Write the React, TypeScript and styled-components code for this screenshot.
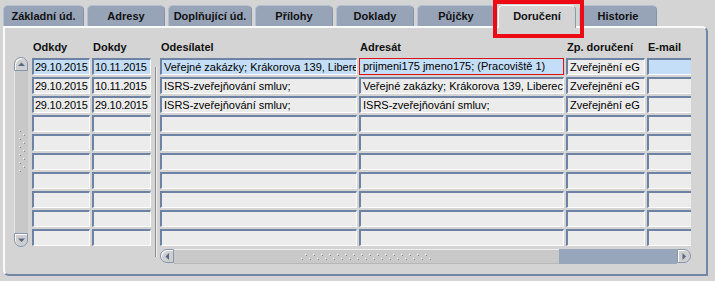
import React from "react";
import styled, { createGlobalStyle } from "styled-components";

const Global = createGlobalStyle`
  html, body { margin: 0; padding: 0; background: #d4d4d4; }
  * { box-sizing: border-box; }
`;

const Screen = styled.div`
  position: relative;
  width: 715px;
  height: 281px;
  background: #d4d4d4;
  font-family: "Liberation Sans", Arial, sans-serif;
  font-size: 11px;
  color: #000;
  overflow: hidden;
`;

const TabBar = styled.div`
  display: flex;
  gap: 3px;
  padding: 5px 0 0 3px;
  height: 27px;
  position: relative;
  z-index: 2;
`;

const Tab = styled.div<{ $w: number; $active?: boolean }>`
  width: ${(p) => p.$w}px;
  height: ${(p) => (p.$active ? 23 : 21)}px;
  display: flex;
  align-items: center;
  justify-content: center;
  font-weight: bold;
  font-size: 11px;
  color: #111;
  border-radius: 5px 5px 0 0;
  background: ${(p) => (p.$active ? "#d4d4d4" : "#97a4b8")};
  border-top: 1px solid ${(p) => (p.$active ? "#ffffff" : "#b4bfcf")};
  border-left: 1px solid ${(p) => (p.$active ? "#ffffff" : "#b4bfcf")};
  border-right: 1px solid ${(p) => (p.$active ? "#8a96aa" : "#8792a6")};
  padding-bottom: ${(p) => (p.$active ? 2 : 0)}px;
`;

const Highlight = styled.div`
  position: absolute;
  left: 493px;
  top: 0;
  width: 91px;
  height: 38px;
  border: 4px solid #ee0a14;
  z-index: 3;
  pointer-events: none;
`;

const Panel = styled.div`
  margin: -1px 7px 0 3px;
  height: 250px;
  border-top: 2px solid #fafafa;
  border-left: 2px solid #fafafa;
  border-right: 2px solid #7486a6;
  border-bottom: 2px solid #7486a6;
  border-radius: 0 6px 0 6px;
  padding: 10px 0 0 9px;
  display: flex;
  align-items: flex-start;
`;

const VScrollCol = styled.div`
  width: 14px;
  margin-top: 19px;
  height: 190px;
  display: flex;
  flex-direction: column;
  margin-right: 4px;
`;

const ScrollBtn = styled.div<{ $dir: "up" | "down" | "left" | "right" }>`
  width: 14px;
  height: 14px;
  flex: none;
  display: flex;
  align-items: center;
  justify-content: center;
  background: #cfcfcf;
  border: 1px solid #8796ae;
  box-shadow: inset 1px 1px 0 #ffffff;
  border-radius: ${(p) =>
    p.$dir === "up"
      ? "7px 7px 0 0"
      : p.$dir === "down"
      ? "0 0 7px 7px"
      : p.$dir === "left"
      ? "7px 0 0 7px"
      : "0 7px 7px 0"};
`;

const VTrack = styled.div`
  flex: 1;
  background: #c8c8c8;
  border-left: 1px solid #e6e6e6;
  display: flex;
  align-items: center;
  justify-content: center;
`;

const Table = styled.div<{ $cols: string }>`
  display: grid;
  grid-template-columns: ${(p) => p.$cols};
  grid-auto-rows: 17px;
  grid-template-rows: 18px;
  row-gap: 2px;
  column-gap: 2px;
`;

const Header = styled.div`
  font-weight: bold;
  font-size: 11px;
  padding-left: 1px;
  display: flex;
  align-items: center;
  white-space: nowrap;
  color: #111;
`;

const Cell = styled.div<{ $sel?: boolean; $red?: boolean; $tight?: boolean }>`
  background: ${(p) => (p.$sel ? "#c4def8" : "#ececec")};
  border-top: 2px solid #6e82a4;
  border-left: 2px solid #6e82a4;
  border-right: 1px solid #ffffff;
  border-bottom: 1px solid #ffffff;
  ${(p) => (p.$red ? "border: 1px solid #e01010; padding-left: 3px;" : "padding-left: 2px;")}
  ${(p) => (p.$tight ? "padding-left: 1px; letter-spacing: -0.25px;" : "")}
  white-space: nowrap;
  overflow: hidden;
  line-height: 14px;
  font-size: 11px;
`;

const Separator = styled.div`
  width: 2px;
  margin: 29px 3px 0 4px;
  height: 190px;
  background: #8d8d8d;
  border-right: 1px solid #f0f0f0;
`;

const RightCol = styled.div`
  display: flex;
  flex-direction: column;
  width: 531px;
  overflow: hidden;
`;

const HScroll = styled.div`
  margin-top: 3px;
  height: 15px;
  width: 531px;
  display: flex;
`;

const HThumb = styled.div`
  width: 385px;
  background: #c9c9c9;
  border-top: 1px solid #eeeeee;
  border-bottom: 1px solid #b8b8b8;
  display: flex;
  align-items: center;
  justify-content: center;
`;

const HTrack = styled.div`
  flex: 1;
  background: #97a6bb;
`;

const Arrow = ({ dir }: { dir: "up" | "down" | "left" | "right" }) => {
  const pts =
    dir === "up"
      ? "1,5 4.5,1.5 8,5"
      : dir === "down"
      ? "1,1.5 8,1.5 4.5,5"
      : dir === "left"
      ? "5,1 5,8 1.5,4.5"
      : "1.5,1 1.5,8 5,4.5";
  const w = dir === "up" || dir === "down" ? 9 : 7;
  const h = dir === "up" || dir === "down" ? 7 : 9;
  return (
    <svg width={w} height={h} viewBox={`0 0 ${w} ${h}`}>
      <polygon points={pts} fill="#56688a" />
    </svg>
  );
};

const VGrip = () => (
  <svg width="10" height="44" viewBox="0 0 10 44">
    {Array.from({ length: 11 }).map((_, i) => (
      <g key={i}>
        <rect x={i % 2 === 0 ? 2 : 6} y={i * 4} width="1" height="1" fill="#ffffff" />
        <rect x={i % 2 === 0 ? 3 : 7} y={i * 4 + 1} width="1" height="1" fill="#8a8a8a" />
      </g>
    ))}
  </svg>
);

const HGrip = () => (
  <svg width="132" height="10" viewBox="0 0 132 10">
    {Array.from({ length: 17 }).map((_, i) => (
      <g key={i}>
        <rect x={i * 8 + 4} y={2} width="1" height="1" fill="#ffffff" />
        <rect x={i * 8 + 5} y={3} width="1" height="1" fill="#8a8a8a" />
        <rect x={i * 8} y={6} width="1" height="1" fill="#ffffff" />
        <rect x={i * 8 + 1} y={7} width="1" height="1" fill="#8a8a8a" />
      </g>
    ))}
  </svg>
);

const tabs: { label: string; w: number; active?: boolean }[] = [
  { label: "Základní úd.", w: 81 },
  { label: "Adresy", w: 78 },
  { label: "Doplňující úd.", w: 84 },
  { label: "Přílohy", w: 78 },
  { label: "Doklady", w: 78 },
  { label: "Půjčky", w: 78 },
  { label: "Doručení", w: 78, active: true },
  { label: "Historie", w: 78 },
];

type Row = { od: string; dok: string; odes: string; adr: string; zp: string; mail: string };
const rows: Row[] = [
  {
    od: "29.10.2015",
    dok: "10.11.2015",
    odes: "Veřejné zakázky; Krákorova 139, Liberec",
    adr: "prijmeni175 jmeno175; (Pracoviště 1)",
    zp: "Zveřejnění eG",
    mail: "",
  },
  {
    od: "29.10.2015",
    dok: "10.11.2015",
    odes: "ISRS-zveřejňování smluv;",
    adr: "Veřejné zakázky; Krákorova 139, Liberec",
    zp: "Zveřejnění eG",
    mail: "",
  },
  {
    od: "29.10.2015",
    dok: "29.10.2015",
    odes: "ISRS-zveřejňování smluv;",
    adr: "ISRS-zveřejňování smluv;",
    zp: "Zveřejnění eG",
    mail: "",
  },
];
const allRows: (Row | null)[] = [...rows, ...Array.from({ length: 7 }).map(() => null)];

export default function App() {
  return (
    <Screen>
      <Global />
      <TabBar>
        {tabs.map((t) => (
          <Tab key={t.label} $w={t.w} $active={t.active}>
            {t.label}
          </Tab>
        ))}
      </TabBar>
      <Highlight />
      <Panel>
        <VScrollCol>
          <ScrollBtn $dir="up">
            <Arrow dir="up" />
          </ScrollBtn>
          <VTrack>
            <VGrip />
          </VTrack>
          <ScrollBtn $dir="down">
            <Arrow dir="down" />
          </ScrollBtn>
        </VScrollCol>
        <Table $cols="58px 59px">
          <Header>Odkdy</Header>
          <Header>Dokdy</Header>
          {allRows.map((r, i) => (
            <React.Fragment key={i}>
              <Cell $sel={i === 0} $tight>
                {r?.od}
              </Cell>
              <Cell $sel={i === 0} $tight>
                {r?.dok}
              </Cell>
            </React.Fragment>
          ))}
        </Table>
        <Separator />
        <RightCol>
          <Table $cols="197px 205px 79px 46px">
            <Header>Odesílatel</Header>
            <Header>Adresát</Header>
            <Header>Zp. doručení</Header>
            <Header>E-mail</Header>
            {allRows.map((r, i) => (
              <React.Fragment key={i}>
                <Cell $sel={i === 0}>{r?.odes}</Cell>
                <Cell $sel={i === 0} $red={i === 0}>
                  {r?.adr}
                </Cell>
                <Cell>{r?.zp}</Cell>
                <Cell $sel={i === 0}>{r?.mail}</Cell>
              </React.Fragment>
            ))}
          </Table>
          <HScroll>
            <ScrollBtn $dir="left">
              <Arrow dir="left" />
            </ScrollBtn>
            <HThumb>
              <HGrip />
            </HThumb>
            <HTrack />
            <ScrollBtn $dir="right">
              <Arrow dir="right" />
            </ScrollBtn>
          </HScroll>
        </RightCol>
      </Panel>
    </Screen>
  );
}
